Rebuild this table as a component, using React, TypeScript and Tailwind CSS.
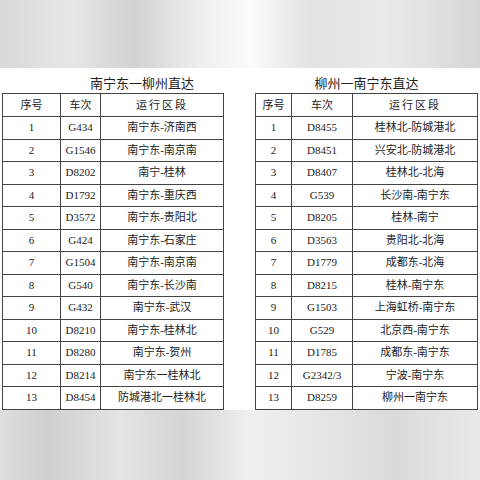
const left = [
  ["1", "G434", "南宁东-济南西"],
  ["2", "G1546", "南宁东-南京南"],
  ["3", "D8202", "南宁-桂林"],
  ["4", "D1792", "南宁东-重庆西"],
  ["5", "D3572", "南宁东-贵阳北"],
  ["6", "G424", "南宁东-石家庄"],
  ["7", "G1504", "南宁东-南京南"],
  ["8", "G540", "南宁东-长沙南"],
  ["9", "G432", "南宁东-武汉"],
  ["10", "D8210", "南宁东-桂林北"],
  ["11", "D8280", "南宁东-贺州"],
  ["12", "D8214", "南宁东一桂林北"],
  ["13", "D8454", "防城港北一桂林北"],
];

const right = [
  ["1", "D8455", "桂林北-防城港北"],
  ["2", "D8451", "兴安北-防城港北"],
  ["3", "D8407", "桂林北-北海"],
  ["4", "G539", "长沙南-南宁东"],
  ["5", "D8205", "桂林-南宁"],
  ["6", "D3563", "贵阳北-北海"],
  ["7", "D1779", "成都东-北海"],
  ["8", "D8215", "桂林-南宁东"],
  ["9", "G1503", "上海虹桥-南宁东"],
  ["10", "G529", "北京西-南宁东"],
  ["11", "D1785", "成都东-南宁东"],
  ["12", "G2342/3", "宁波-南宁东"],
  ["13", "D8259", "柳州一南宁东"],
];

const font = { fontFamily: '"Liberation Serif", "Noto Sans CJK SC", serif' };

const Schedule = ({
  title,
  rows,
  widths,
  titleClass,
}: {
  title: string;
  rows: string[][];
  widths: string[];
  titleClass: string;
}) => (
  <div className="flex flex-col">
    <div
      className={`h-[25px] flex items-end pb-[1px] justify-center text-[13px] text-[#222] ${titleClass}`}
      style={{ fontFamily: '"Noto Sans CJK SC", sans-serif' }}
    >
      {title}
    </div>
    <table className="border-collapse border-[1.5px] border-[#333] text-[11px] text-[#222]" style={font}>
      <colgroup>
        {widths.map((w, i) => (
          <col key={i} className={w} />
        ))}
      </colgroup>
      <thead>
        <tr className="h-[23px]">
          <th className="border border-[#444] font-normal">序号</th>
          <th className="border border-[#444] font-normal">车次</th>
          <th className="border border-[#444] font-normal tracking-[2px]">运行区段</th>
        </tr>
      </thead>
      <tbody>
        {rows.map((r) => (
          <tr key={r[0]} className="h-[22.5px]">
            <td className="border border-[#444] text-center leading-none">{r[0]}</td>
            <td className="border border-[#444] text-center leading-none">{r[1]}</td>
            <td className="border border-[#444] text-center leading-none">{r[2]}</td>
          </tr>
        ))}
      </tbody>
    </table>
  </div>
);

export default function App() {
  return (
    <div className="w-[480px] h-[480px] flex flex-col overflow-hidden bg-white">
      <div className="h-[68px] bg-[linear-gradient(90deg,#d9d9d9_0%,#e6e6e6_15%,#d2d2d2_28%,#efefef_42%,#fbfbfb_52%,#e2e2e2_65%,#eaeaea_80%,#d6d6d6_100%)]" />
      <div className="h-[342px] flex gap-[31px] pl-[2px] bg-white">
        <Schedule
          title="南宁东一柳州直达"
          rows={left}
          widths={["w-[58px]", "w-[40px]", "w-[123px]"]}
          titleClass="pl-[58px]"
        />
        <Schedule
          title="柳州一南宁东直达"
          rows={right}
          widths={["w-[36px]", "w-[61px]", "w-[125px]"]}
          titleClass=""
        />
      </div>
      <div className="flex-1 bg-[linear-gradient(90deg,#dedede_0%,#cfcfcf_10%,#e4e4e4_25%,#d4d4d4_38%,#f0f0f0_52%,#e6e6e6_66%,#dadada_82%,#e9e9e9_100%)]" />
    </div>
  );
}
